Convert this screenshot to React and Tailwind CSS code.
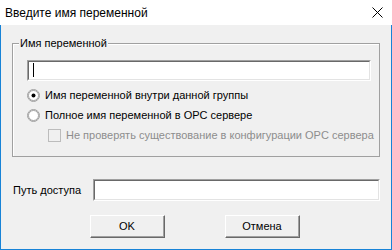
import React from "react";

const font = { fontFamily: '"Liberation Sans", Arial, sans-serif' };

function Radio({ checked }) {
  return (
    <svg width="13" height="13" viewBox="0 0 13 13" className="shrink-0">
      <circle cx="6.5" cy="6.5" r="6" fill="#ffffff" stroke="#a0a0a0" strokeWidth="1" />
      <circle cx="6.5" cy="6.5" r="5" fill="#ffffff" stroke="#696969" strokeWidth="0.6" />
      {checked && <circle cx="6.5" cy="6.5" r="2" fill="#000000" />}
    </svg>
  );
}

function Sunken({ className }) {
  return (
    <div className={"border-t border-l border-[#a0a0a0] border-r border-r-white border-b border-b-white " + className}>
      <div className="h-full w-full border-t border-l border-[#696969] border-r border-r-[#e3e3e3] border-b border-b-[#e3e3e3] bg-white" />
    </div>
  );
}

function Btn({ children }) {
  return (
    <div className="w-[75px] h-[23px] border-r border-b border-[#696969] border-t border-t-white border-l border-l-white">
      <div className="h-full w-full border-r border-b border-[#a0a0a0] bg-[#f0f0f0] flex items-center justify-center text-[11px] text-black">
        {children}
      </div>
    </div>
  );
}

export default function App() {
  return (
    <div className="w-[392px] h-[250px] flex flex-col bg-white" style={font}>
      <div className="h-[25px] bg-white flex items-center justify-between pl-[5px] pr-[9px] shrink-0">
        <span className="text-[12px] text-black">Введите имя переменной</span>
        <svg width="11" height="11" viewBox="0 0 11 11">
          <path d="M0.5 0.5 L10.5 10.5 M10.5 0.5 L0.5 10.5" stroke="#000" strokeWidth="1" />
        </svg>
      </div>
      <div className="flex-1 bg-[#f0f0f0] border-l border-r border-b border-[#1883d7] flex flex-col pl-[11px] text-[11px] text-black">
        <div className="relative mt-[18px] w-[368px] h-[114px] border border-[#a0a0a0] shadow-[inset_1px_1px_0_#ffffff] pt-[16px] pl-[14px] pb-[7px]">
          <span className="absolute left-[6px] top-[-7px] bg-[#f0f0f0] px-[1px] leading-[13px]">Имя переменной</span>
          <div className="relative w-[344px] h-[21px]">
            <Sunken className="w-full h-full" />
            <div className="absolute left-[6px] top-[3px] w-px h-[14px] bg-black" />
          </div>
          <div className="mt-[4px] h-[20px] flex items-center gap-[5px]">
            <Radio checked />
            <span>Имя переменной внутри данной группы</span>
          </div>
          <div className="h-[20px] flex items-center gap-[5px]">
            <Radio />
            <span>Полное имя переменной в OPC сервере</span>
          </div>
          <div className="h-[20px] flex items-center gap-[5px] pl-[21px]">
            <div className="w-[13px] h-[13px] border border-[#bcbcbc] bg-[#f0f0f0] shrink-0" />
            <span className="text-[#8d8d8d]">Не проверять существование в конфигурации OPC сервера</span>
          </div>
        </div>
        <div className="mt-[22px] flex items-center h-[22px]">
          <span className="w-[81px] pl-[1px]">Путь доступа</span>
          <Sunken className="w-[287px] h-[22px]" />
        </div>
        <div className="mt-[14px] flex pl-[78px] gap-[60px]">
          <Btn>OK</Btn>
          <Btn>Отмена</Btn>
        </div>
      </div>
    </div>
  );
}
